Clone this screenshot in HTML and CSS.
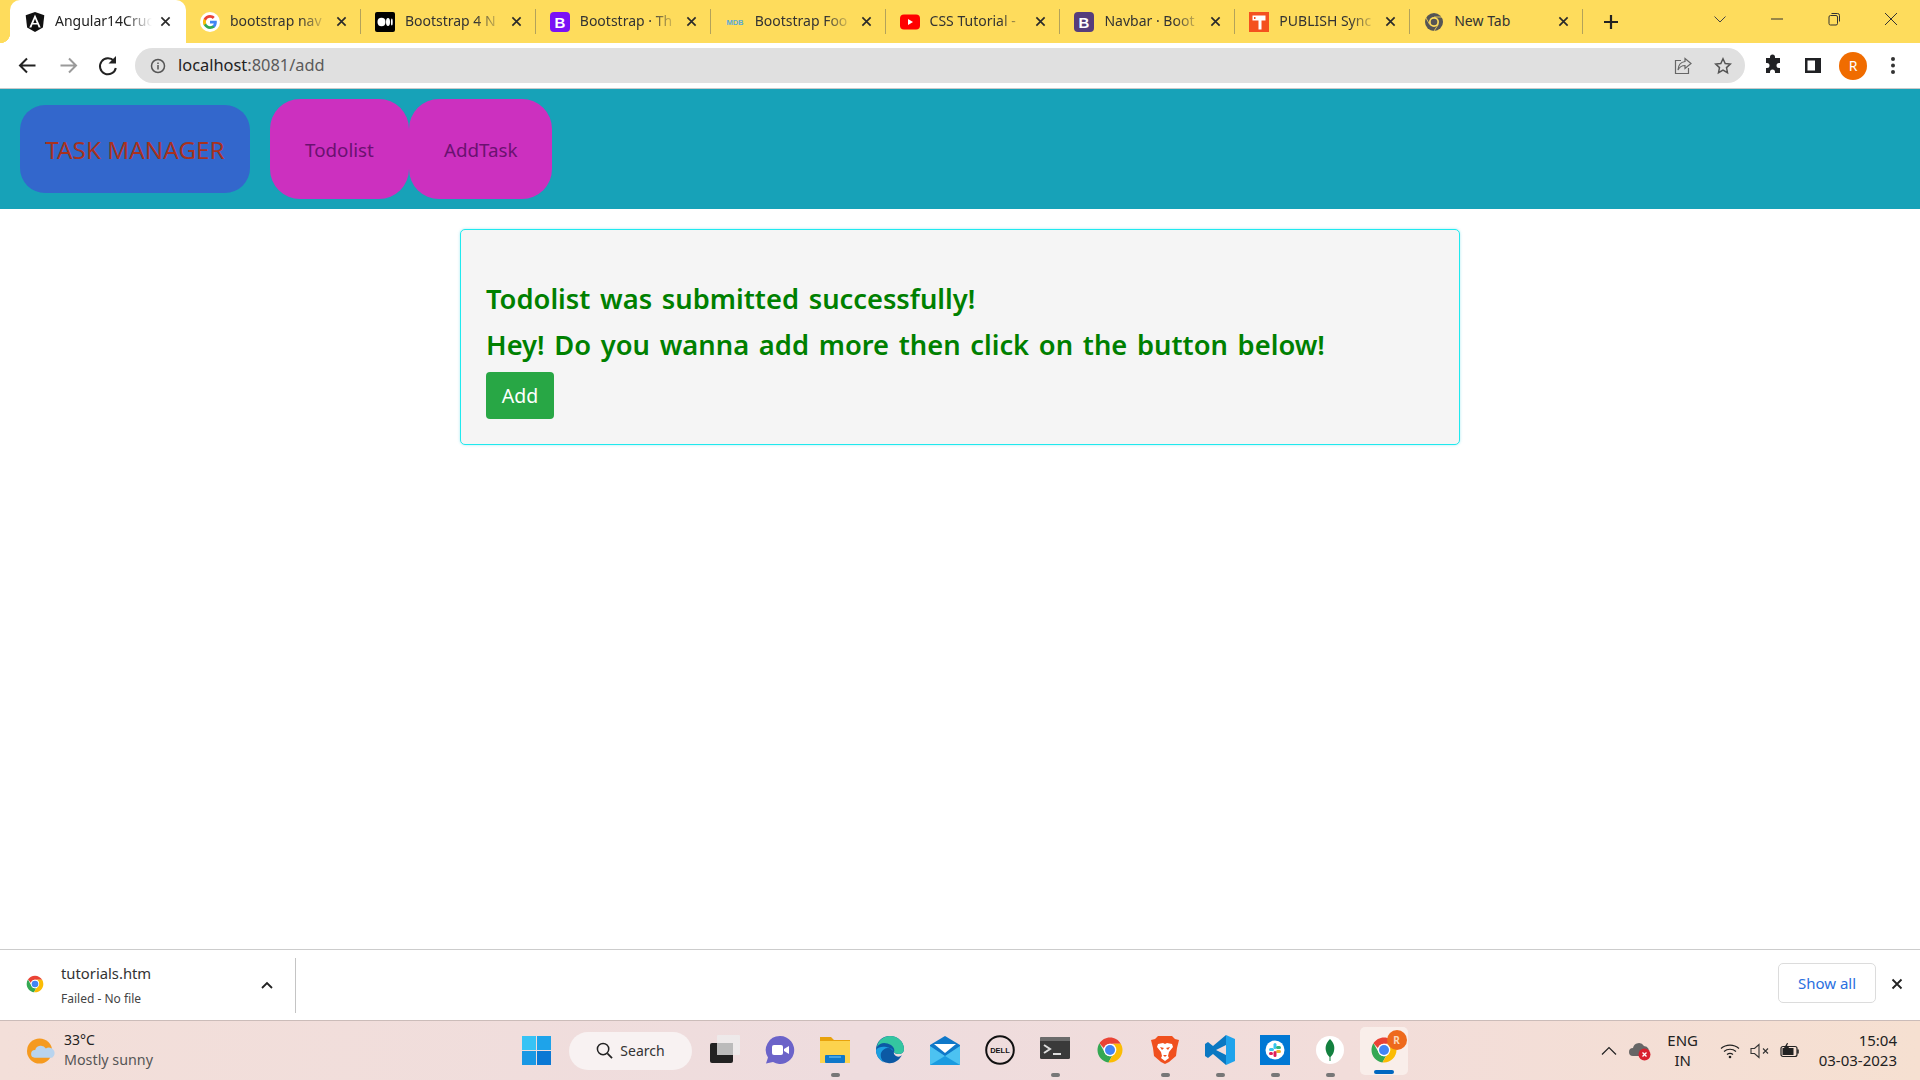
FILE: index.html
```html
<!DOCTYPE html>
<html lang="en">
<head>
<meta charset="utf-8">
<title>Angular14Crud</title>
<link rel="stylesheet" href="styles.css">
</head>
<body>
<svg class="defs" width="0" height="0" aria-hidden="true">
  <defs>
    <symbol id="chrome" viewBox="0 0 48 48">
      <path fill="#ea4335" d="M24 4c7.4 0 13.9 4 17.3 10H24c-4.6 0-8.4 3.100-9.600 7.300L7.100 13.300C10.700 7.700 16.900 4 24 4z"/>
      <path fill="#34a853" d="M7.100 13.300l8.700 15.200c1.700 3.300 4.600 5.500 8.200 5.500 1.200 0 2.300-.2 3.300-.6L21.500 43.800C11.500 42.600 4 34.200 4 24c0-3.900 1.100-7.500 3.100-10.700z"/>
      <path fill="#fbbc04" d="M41.300 14c1.700 3 2.700 6.400 2.700 10 0 11-9 20-20 20h-2.500l8.300-14.500C31.500 27.500 34 26.500 34 24c0-3.900-2.200-7.600-5.500-10z"/>
      <circle cx="24" cy="24" r="10" fill="#fff"/>
      <circle cx="24" cy="24" r="8" fill="#4285f4"/>
    </symbol>
    <symbol id="x" viewBox="0 0 12 12">
      <path d="M1.500 1.500l9 9M10.500 1.500l-9 9" fill="none" stroke="currentColor" stroke-width="1.800"/>
    </symbol>
  </defs>
</svg>

<div class="screen">
  <div class="tabstrip">
    <div class="tab active">
      <svg class="fav" viewBox="0 0 20 20"><path fill="#111" d="M10 0l9.300 3.300-1.400 12.300L10 20l-7.900-4.400L.7 3.300z"/><path fill="#fff" d="M10 2.600L4.300 15.400h2.100l1.100-2.800h5l1.100 2.800h2.100zm1.700 8.300H8.300L10 6.700z"/></svg>
      <span class="tab-title">Angular14Cruc</span>
      <svg class="tab-x"><use href="#x"/></svg>
    </div>
    <div class="tab">
      <svg class="fav" viewBox="0 0 20 20"><circle cx="10" cy="10" r="10" fill="#fff"/><path fill="#4285f4" d="M16.800 10.200c0-.5 0-1-.1-1.400H10v2.700h3.800c-.2.900-.7 1.600-1.400 2.100v1.800h2.300c1.300-1.200 2.100-3 2.100-5.200z"/><path fill="#34a853" d="M10 17c1.900 0 3.500-.6 4.700-1.700l-2.300-1.800c-.6.400-1.400.7-2.400.7-1.800 0-3.400-1.200-3.900-2.900H3.700v1.800C4.900 15.500 7.300 17 10 17z"/><path fill="#fbbc04" d="M6.100 11.400c-.3-.9-.3-1.900 0-2.800V6.800H3.700c-1 1.900-1 4.500 0 6.400z"/><path fill="#ea4335" d="M10 5.800c1 0 2 .4 2.700 1.100l2-2C13.500 3.700 11.800 3 10 3 7.300 3 4.900 4.500 3.700 6.800l2.400 1.800C6.600 7 8.200 5.800 10 5.800z"/></svg>
      <span class="tab-title">bootstrap nav</span>
      <svg class="tab-x"><use href="#x"/></svg>
    </div>
    <div class="tab">
      <svg class="fav" viewBox="0 0 20 20"><rect width="20" height="20" rx="2" fill="#000"/><ellipse cx="6.500" cy="10" rx="4" ry="4.200" fill="#fff"/><ellipse cx="13" cy="10" rx="2" ry="4" fill="#fff"/><ellipse cx="16.800" cy="10" rx=".9" ry="3.600" fill="#fff"/></svg>
      <span class="tab-title">Bootstrap 4 N</span>
      <svg class="tab-x"><use href="#x"/></svg>
    </div>
    <div class="tab">
      <svg class="fav" viewBox="0 0 20 20"><rect width="20" height="20" rx="4" fill="#7a12f5"/><text x="10" y="15.500" class="fav-b">B</text></svg>
      <span class="tab-title">Bootstrap · Th</span>
      <svg class="tab-x"><use href="#x"/></svg>
    </div>
    <div class="tab">
      <svg class="fav" viewBox="0 0 20 20"><text x="10" y="13" class="fav-mdb">MDB</text></svg>
      <span class="tab-title">Bootstrap Foo</span>
      <svg class="tab-x"><use href="#x"/></svg>
    </div>
    <div class="tab">
      <svg class="fav" viewBox="0 0 20 20"><rect y="2.500" width="20" height="15" rx="4" fill="#f00"/><path fill="#fff" d="M8 7l5 3-5 3z"/></svg>
      <span class="tab-title">CSS Tutorial -</span>
      <svg class="tab-x"><use href="#x"/></svg>
    </div>
    <div class="tab">
      <svg class="fav" viewBox="0 0 20 20"><rect width="20" height="20" rx="4" fill="#563d7c"/><text x="10" y="15.500" class="fav-b">B</text></svg>
      <span class="tab-title">Navbar · Boot</span>
      <svg class="tab-x"><use href="#x"/></svg>
    </div>
    <div class="tab">
      <svg class="fav" viewBox="0 0 20 20"><rect width="20" height="20" fill="#f4511e"/><path fill="#fff" d="M3.500 3.500h13v5h-4v9h-3v-9h-6zM5 5v2h1.500V5z"/></svg>
      <span class="tab-title">PUBLISH Sync</span>
      <svg class="tab-x"><use href="#x"/></svg>
    </div>
    <div class="tab last">
      <svg class="fav" viewBox="0 0 20 20"><circle cx="10" cy="10" r="9" fill="#555"/><circle cx="10" cy="10" r="5" fill="#fedc5c"/><circle cx="10" cy="10" r="3.300" fill="#555"/><path d="M10 5h8M5.700 12.500L2 6M14.300 12.500L10 19" stroke="#fedc5c" stroke-width=".8"/></svg>
      <span class="tab-title plain">New Tab</span>
      <svg class="tab-x"><use href="#x"/></svg>
    </div>
    <svg class="newtab" viewBox="0 0 16 16"><path d="M8 1v14M1 8h14" fill="none" stroke="#222" stroke-width="2.200"/></svg>
    <div class="winctl">
      <svg class="win-btn chev" viewBox="0 0 14 14"><path d="M1.500 4.500L7 10l5.500-5.500" fill="none" stroke="#444" stroke-width="1"/></svg>
      <svg class="win-btn" viewBox="0 0 14 14"><path d="M1 7h12" stroke="#333" stroke-width="1"/></svg>
      <svg class="win-btn" viewBox="0 0 14 14"><rect x="2" y="3.500" width="8.500" height="9.500" rx="1.500" fill="none" stroke="#333" stroke-width="1"/><path d="M4.500 1.500h6a2 2 0 0 1 2 2v6" fill="none" stroke="#333" stroke-width="1"/></svg>
      <svg class="win-btn" viewBox="0 0 14 14"><path d="M1 1l12 12M13 1L1 13" stroke="#333" stroke-width="1"/></svg>
    </div>
  </div>

  <div class="toolbar">
    <svg class="tool" viewBox="0 0 40 35"><path d="M27.500 17.500H13M19 10.500l-7 7 7 7" fill="none" stroke="#222" stroke-width="2"/></svg>
    <svg class="tool" viewBox="0 0 40 35"><path d="M12.500 17.500H27M21 10.500l7 7-7 7" fill="none" stroke="#9a9a9a" stroke-width="2"/></svg>
    <svg class="tool" viewBox="0 0 40 35"><path d="M26 13a8 8 0 1 0 1.800 7" fill="none" stroke="#222" stroke-width="2"/><path fill="#222" d="M28 8v7.500h-7.500z"/></svg>
    <div class="omnibox">
      <svg class="omni-info" viewBox="0 0 16 16"><circle cx="8" cy="8" r="6.500" fill="none" stroke="#555" stroke-width="1.500"/><path d="M8 7v4.500M8 4.500v1.500" stroke="#555" stroke-width="1.500"/></svg>
      <span class="url"><span class="url-host">localhost</span>:8081/add</span>
      <svg class="omni-act share" viewBox="0 0 18 18"><path d="M7 3.500H1.500v13h13V11" fill="none" stroke="#666" stroke-width="1.200"/><path d="M11 1.500l6 5-6 5V8.500C7.500 8.500 5.500 10 4 13c.3-5 3-8 7-8.500z" fill="none" stroke="#666" stroke-width="1.200"/></svg>
      <svg class="omni-act" viewBox="0 0 18 18"><path d="M9 1.800l2.200 4.700 5.100.6-3.800 3.500 1 5.100L9 13.200l-4.500 2.500 1-5.100L1.700 7.100l5.100-.6z" fill="none" stroke="#555" stroke-width="1.500"/></svg>
    </div>
    <svg class="tool" viewBox="0 0 40 35"><path fill="#202124" d="M13 12h4v-1a2.500 2.500 0 0 1 5 0v1h5v5h-1a2.500 2.500 0 0 0 0 5h1v5h-5v-1a2.500 2.500 0 0 0-5 0v1h-4v-5h1a2.500 2.500 0 0 0 0-5h-1z" transform="translate(0 -2)"/></svg>
    <svg class="tool" viewBox="0 0 40 35"><path fill-rule="evenodd" fill="#202124" d="M12 10h16v15H12zm2.500 2.500v10H22v-10z"/></svg>
    <div class="tool avatar-wrap"><span class="avatar">R</span></div>
    <svg class="tool" viewBox="0 0 40 35"><circle cx="20" cy="11" r="2" fill="#333"/><circle cx="20" cy="17.500" r="2" fill="#333"/><circle cx="20" cy="24" r="2" fill="#333"/></svg>
  </div>

  <nav class="appnav">
    <a class="brand">TASK MANAGER</a>
    <a class="navlink">Todolist</a>
    <a class="navlink">AddTask</a>
  </nav>

  <main class="content">
    <section class="card">
      <h4 class="msg">Todolist was submitted successfully!</h4>
      <h4 class="msg">Hey! Do you wanna add more then click on the button below!</h4>
      <button class="addbtn">Add</button>
    </section>
  </main>

  <div class="downloads">
    <div class="dl-item">
      <svg class="dl-icon"><use href="#chrome"/></svg>
      <div class="dl-text">
        <div class="dl-name">tutorials.htm</div>
        <div class="dl-status">Failed - No file</div>
      </div>
      <svg class="dl-chev" viewBox="0 0 12 8"><path d="M1 7l5-5 5 5" fill="none" stroke="#222" stroke-width="1.800"/></svg>
    </div>
    <button class="showall">Show all</button>
    <svg class="dl-x"><use href="#x"/></svg>
  </div>

  <footer class="taskbar">
    <div class="weather">
      <svg class="weather-icon" viewBox="0 0 30 28"><circle cx="13" cy="14" r="13" fill="#f59a1f"/><path fill="#b9d4ee" d="M8 21a4 4 0 0 1 .5-8 6 6 0 0 1 11-1.500A5 5 0 0 1 26 21z"/></svg>
      <div class="weather-text">
        <div class="temp">33°C</div>
        <div class="sky">Mostly sunny</div>
      </div>
    </div>
    <div class="apps">
      <svg class="winlogo" viewBox="0 0 29 29"><rect width="14" height="14" fill="#37c3f5"/><rect x="15" width="14" height="14" fill="#1ea3ea"/><rect y="15" width="14" height="14" fill="#1a98e4"/><rect x="15" y="15" width="14" height="14" fill="#0b78d4"/></svg>
      <div class="search">
        <svg class="search-icon" viewBox="0 0 18 18"><circle cx="7.500" cy="7.500" r="6" fill="none" stroke="#222" stroke-width="1.600"/><path d="M12 12l5 5" stroke="#222" stroke-width="1.800"/></svg>
        <span>Search</span>
      </div>
      <div class="app"><svg viewBox="0 0 30 30"><rect y="8" width="23" height="20" rx="2" fill="#222"/><rect x="7" width="23" height="20" rx="1" fill="#eee" fill-opacity=".75"/><rect x="7" y="8" width="16" height="12" fill="#bbb"/></svg></div>
      <div class="app"><svg viewBox="0 0 30 30"><path fill="#6b63c9" d="M15 1a14 14 0 1 1-7 26l-7 1.500 2-6A14 14 0 0 1 15 1z"/><rect x="7" y="10" width="11" height="10" rx="2" fill="#fff"/><path fill="#fff" d="M19 14l5-3v8l-5-3z"/></svg></div>
      <div class="app dot"><svg viewBox="0 0 30 30"><path fill="#e8a20c" d="M0 2h11l3 3h16v4H0z"/><path fill="#fcd34d" d="M0 6h30v22H0z"/><rect x="5" y="20" width="20" height="8" rx="1" fill="#0f78c9"/><path d="M9 22h12" stroke="#7ed0ff" stroke-width="1"/></svg></div>
      <div class="app"><svg viewBox="0 0 30 30"><path fill="#0c59a4" d="M27 20c-3 6-9 9-14 8C6 27 1 22 1 15 1 7 7 1 15 1c8 0 14 6 14 13 0 3-2 5-5.500 5-2.500 0-4-1-4.500-2 0 0-1 2 2 4 2 1 4 1 6-1z"/><path fill="#34c6a0" d="M2 12C3 5 9 1 15 1c8 0 14 6 14 13 0 3-2 5-5.500 5-2 0-3.500-.7-4.500-2 1-2 0-5-3-7C11 7 5 7 2 12z"/><path fill="#1d9fe0" d="M1 15c0 6 4 11 9 13-3-2-5-6-4-10 1-3 4-5 7-5 3 0 5 1 5 3-3-5-14-6-17-1z"/></svg></div>
      <div class="app"><svg viewBox="0 0 30 30"><path fill="#0f78c9" d="M0 10L15 1l15 9v20H0z"/><path fill="#fff" d="M4 9h22l-11 9z"/><path fill="#4cc2f1" d="M0 11l15 10 15-10v19H0z"/><path fill="#1a9be0" d="M0 30l15-9 15 9z"/></svg></div>
      <div class="app"><svg viewBox="0 0 30 30"><circle cx="15" cy="15" r="13.800" fill="none" stroke="#111" stroke-width="2"/><text x="15" y="18.200" class="dell">DELL</text></svg></div>
      <div class="app dot"><svg viewBox="0 0 30 30"><rect y="2" width="30" height="22" rx="1.500" fill="#3a3a3a"/><path d="M0 3.500A1.500 1.500 0 0 1 1.500 2h28.500v4H0z" fill="#6b6b6b"/><path d="M4 10l6 4-6 4" fill="none" stroke="#ddd" stroke-width="2"/><path d="M13 19h8" stroke="#ddd" stroke-width="2"/></svg></div>
      <div class="app"><svg><use href="#chrome"/></svg></div>
      <div class="app dot"><svg viewBox="0 0 30 30"><path fill="#f0501e" d="M8 1h14l3 3 4 1-2 8-1 8-7 6-4 2-4-2-7-6-1-8-2-8 4-1z"/><path fill="#fff" d="M8 9l5-1 2 1 2-1 5 1 1 3-4 5-1 4 1 2-4 3-4-3 1-2-1-4-4-5z"/><path fill="#f0501e" d="M10 12l4 1-2 2zM20 12l-4 1 2 2zM13 20h4l-2 2z"/></svg></div>
      <div class="app dot"><svg viewBox="0 0 30 30"><path fill="#1fa3ec" d="M21 0l9 4v22l-9 4z"/><path fill="#0a78c2" d="M21 0v10L11 15l10 5v10l-13-11-5 4-3-2v-12l3-2 5 4z"/><path fill="#0a78c2" d="M4 12l4 3-4 3z"/></svg></div>
      <div class="app dot"><svg viewBox="0 0 30 30"><rect width="30" height="30" fill="#0078d4"/><circle cx="15" cy="15" r="9.500" fill="#fff"/><rect x="13.500" y="8" width="3" height="6" rx="1.500" fill="#36c5f0"/><rect x="9" y="13" width="5" height="3" rx="1.500" fill="#36c5f0"/><rect x="16" y="11" width="5" height="3" rx="1.500" fill="#2eb67d"/><rect x="16" y="15" width="5" height="3" rx="1.500" fill="#ecb22e"/><rect x="13.500" y="16" width="3" height="6" rx="1.500" fill="#e01e5a"/><rect x="9" y="17" width="4" height="3" rx="1.500" fill="#e01e5a"/></svg></div>
      <div class="app dot"><svg viewBox="0 0 30 30"><circle cx="15" cy="15" r="14" fill="#fff"/><path fill="#13803f" d="M15 4c4 4 5 8 4 12-.5 3-2.500 5-3.500 6v4h-1v-4c-1-1-3-3-3.500-6-1-4 0-8 4-12z"/></svg></div>
      <div class="app tile">
        <svg><use href="#chrome"/></svg>
        <span class="badge">R</span>
      </div>
    </div>
    <div class="tray">
      <svg class="tray-caret" viewBox="0 0 16 10"><path d="M1 8.500L8 1.500l7 7" fill="none" stroke="#222" stroke-width="1.200"/></svg>
      <svg class="tray-cloud" viewBox="0 0 22 20"><path fill="#666" d="M4 15a4 4 0 0 1 0-8 6 6 0 0 1 11-2 5 5 0 0 1 4 8v2z"/><circle cx="15.500" cy="13.500" r="6" fill="#d9202e"/><path d="M13.500 11.500l4 4M17.500 11.500l-4 4" stroke="#fff" stroke-width="1.300"/></svg>
      <div class="lang"><div>ENG</div><div>IN</div></div>
      <svg class="tray-ico wifi" viewBox="0 0 20 16"><path d="M1 5.500c5-4.500 13-4.500 18 0M4 8.500c3.500-3 8.500-3 12 0M7 11.500c2-1.500 4-1.500 6 0" fill="none" stroke="#222" stroke-width="1.200"/><circle cx="10" cy="14" r="1.300" fill="#222"/></svg>
      <svg class="tray-ico" viewBox="0 0 20 16"><path d="M1 5.500h3.500L9 1.500v13l-4.500-4H1z" fill="none" stroke="#333" stroke-width="1.100"/><path d="M13 5.500l5 5M18 5.500l-5 5" stroke="#333" stroke-width="1.100"/></svg>
      <svg class="tray-ico" viewBox="0 0 20 16"><rect x="1" y="3.500" width="16" height="10" rx="2" fill="none" stroke="#222" stroke-width="1.200"/><rect x="2.500" y="5" width="11" height="7" fill="#222"/><path d="M18 6.500v4" stroke="#222" stroke-width="1.500"/><path d="M7 0L4 5h3l-1 3 4-5H7l1-3z" fill="#222"/></svg>
      <div class="clock"><div>15:04</div><div>03-03-2023</div></div>
    </div>
  </footer>
</div>
</body>
</html>
```

FILE: styles.css
```css
* { box-sizing: border-box; }
html, body { margin: 0; padding: 0; }
body { font-family: "Noto Sans", "Open Sans", "Liberation Sans", sans-serif; background: #fff; overflow: hidden; }
.defs { position: absolute; }
.screen { width: 1920px; height: 1080px; display: flex; flex-direction: column; overflow: hidden; }

/* tab strip */
.tabstrip { height: 43px; flex: none; background: #fedc5c; display: flex; align-items: stretch; padding-left: 10px; }
.tab { width: 174.9px; flex: none; display: flex; align-items: center; padding-left: 14px; padding-right: 14px; position: relative; color: #333; font-size: 14px; }
.tab.last { width: 173px; }
.tab::after { content: ""; position: absolute; right: 0; top: 9px; height: 25px; width: 1px; background: #b3a25a; }
.tab.active { width: 176px; padding-left: 15px; padding-right: 15px; background: #fff; border-radius: 10px 10px 0 0; color: #222; }
.tab.active::after { display: none; }
.tab.active::before { content: ""; position: absolute; left: -10px; bottom: 0; width: 10px; height: 10px; background: radial-gradient(circle at 0 0, transparent 10px, #fff 10.5px); }
.fav { width: 20px; height: 20px; flex: none; margin-right: 10px; }
.fav-b { font: 700 15px "Liberation Sans", sans-serif; fill: #fff; text-anchor: middle; }
.fav-mdb { font: 700 7.500px "Liberation Sans", sans-serif; fill: #59a9d8; text-anchor: middle; }
.tab-title { flex: 1; min-width: 0; line-height: 20px; margin-bottom: 2px; white-space: nowrap; overflow: hidden; -webkit-mask-image: linear-gradient(to right, #000 72%, transparent 100%); mask-image: linear-gradient(to right, #000 72%, transparent 100%); }
.tab-title.plain { -webkit-mask-image: none; mask-image: none; }
.tab-x { width: 11px; height: 11px; flex: none; margin-left: 8px; color: #2a2a2a; }
.newtab { width: 16px; height: 16px; flex: none; align-self: center; margin-left: 20px; }
.winctl { margin-left: auto; display: flex; align-items: flex-start; padding-right: 22px; }
.win-btn { width: 14px; height: 14px; margin-top: 12px; margin-left: 43px; }
.chev { margin-left: 0; }

/* toolbar */
.toolbar { height: 46px; flex: none; background: #fff; border-bottom: 1px solid #c9c9c9; display: flex; align-items: center; padding: 0 7px 0 8px; }
.tool { width: 40px; height: 35px; flex: none; }
.omnibox { flex: 1; height: 35px; margin: 0 8px 0 7px; border-radius: 18px; background: #e0e0e0; display: flex; align-items: center; padding: 0 13px 0 15px; }
.omni-info { width: 16px; height: 16px; margin-right: 12px; flex: none; }
.url { flex: 1; font-size: 16.400px; line-height: 20px; margin-bottom: 2px; color: #5a5a5a; }
.url-host { color: #222; }
.omni-act { width: 18px; height: 18px; margin-left: 22px; flex: none; }
.avatar-wrap { display: flex; align-items: center; justify-content: center; }
.avatar { width: 28px; height: 28px; border-radius: 50%; background: #f06c00; color: #fff; font-size: 14px; display: flex; align-items: center; justify-content: center; }

/* app navbar */
.appnav { height: 120px; flex: none; background: #17a2b8; display: flex; align-items: center; padding-left: 20px; }
.brand { width: 230px; height: 88px; margin-right: 20px; border-radius: 25px; background: #3367cc; color: #a8321e; font-size: 24.300px; display: flex; align-items: center; justify-content: center; }
.navlink { height: 100px; padding: 2px 35px 0; border-radius: 30px; background: #cc30bf; color: #6a1270; font-size: 18.800px; display: flex; align-items: center; }

/* content */
.content { flex: 1; min-height: 0; padding-top: 20px; }
.card { width: 1000px; margin: 0 auto; padding: 46px 25px 25px; background: #f5f5f5; border: 1px solid #1fe9ee; border-radius: 5px; box-shadow: 0 0 3px rgba(0, 200, 220, .35); }
.msg { margin: 0; font-size: 27.300px; word-spacing: 2.600px; line-height: 46px; font-weight: 600; color: #008000; }
.addbtn { display: block; width: 68px; height: 47px; margin-top: 4px; padding: 0; border: 0; border-radius: 4px; background: #28a745; color: #fff; font: inherit; font-size: 19.500px; }

/* download bar */
.downloads { height: 71px; flex: none; background: #fff; border-top: 1px solid #ccc; display: flex; align-items: center; padding-right: 17px; }
.dl-item { width: 296px; height: 55px; display: flex; align-items: center; padding-left: 25px; border-right: 1px solid #c4c4c4; }
.dl-icon { width: 20px; height: 20px; flex: none; margin-right: 16px; margin-bottom: 2px; }
.dl-text { flex: 1; }
.dl-name { font-size: 14.800px; line-height: 20px; color: #333; }
.dl-status { font-size: 12px; line-height: 18px; margin-top: 7px; color: #444; }
.dl-chev { width: 12px; height: 8px; flex: none; margin-right: 22px; }
.showall { margin-left: auto; margin-bottom: 4px; width: 98px; height: 40px; padding: 0; background: #fff; border: 1px solid #dcdcdc; border-radius: 5px; color: #2a6fe0; font: inherit; font-size: 15px; }
.dl-x { width: 12px; height: 12px; margin-left: 15px; margin-bottom: 3px; color: #222; flex: none; }

/* taskbar */
.taskbar { height: 60px; flex: none; border-top: 1px solid #cbbcb9; background: linear-gradient(to right, #f3dfd9, #eedcde 45%, #f2ddda 70%, #f6e0d1); display: flex; align-items: center; color: #222; }
.weather { width: 522px; flex: none; display: flex; align-items: center; padding-left: 27px; }
.weather-icon { width: 29px; height: 28px; flex: none; margin-right: 8px; }
.weather-text { margin-bottom: 2px; }
.temp { font-size: 14px; line-height: 20px; }
.sky { font-size: 14.300px; line-height: 20px; color: #555; }
.apps { display: flex; align-items: center; height: 100%; }
.winlogo { width: 29px; height: 29px; flex: none; margin-right: 18px; }
.search { width: 123px; height: 38px; border-radius: 19px; background: #f8f2f2; display: flex; align-items: center; justify-content: center; font-size: 14px; color: #333; margin-right: 5.500px; }
.search-icon { width: 17px; height: 17px; margin-right: 7px; }
.app { width: 55px; height: 100%; display: flex; align-items: center; justify-content: center; position: relative; padding-bottom: 1px; }
.app svg { width: 30px; height: 30px; }
.app.dot::after { content: ""; position: absolute; bottom: 3px; left: 23px; width: 9px; height: 4px; border-radius: 2px; background: #777; }
.dell { font: 700 7.500px "Liberation Sans", sans-serif; fill: #111; text-anchor: middle; }
.tile { width: 48px; height: 48px; margin-left: 2px; background: #f9eeea; border-radius: 5px; }
.tile::after { content: ""; position: absolute; bottom: 1px; left: 14px; width: 20px; height: 4px; border-radius: 2px; background: #0067c0; }
.badge { position: absolute; top: 3px; right: 1px; width: 20px; height: 20px; border-radius: 50%; background: #ee6a1c; color: #fbd9b9; font-size: 10px; font-weight: 700; display: flex; align-items: center; justify-content: center; }
.tray { margin-left: auto; display: flex; align-items: center; padding-right: 23px; font-size: 15px; }
.tray-caret { width: 16px; height: 10px; margin-right: 12px; flex: none; }
.tray-cloud { width: 22px; height: 20px; margin-right: 15px; flex: none; }
.lang { text-align: center; line-height: 20px; width: 34px; margin-right: 20px; margin-bottom: 2px; }
.tray-ico { width: 20px; height: 16px; margin-right: 10px; flex: none; }
.clock { text-align: right; line-height: 20px; margin-left: 9px; margin-bottom: 2px; color: #222; }
```
